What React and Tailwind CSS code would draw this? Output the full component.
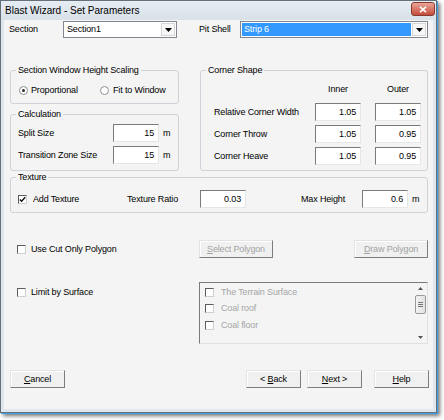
import React from "react";

const Combo = ({ text, w, selected }) => (
  <div className={`${w} h-[17px] bg-white border border-[#828790] flex`}>
    {selected ? (
      <div className="flex-1 m-[1px] bg-[#3399ff] text-white flex items-center pl-[2px]">{text}</div>
    ) : (
      <div className="flex-1 flex items-center pl-[3px]">{text}</div>
    )}
    <div className="w-[14px] m-[1px] ml-0 bg-[#f7f7f7] border border-[#d6d6d6] flex items-center justify-center">
      <svg width="7" height="4" viewBox="0 0 7 4">
        <path d="M0 0h7L3.5 4z" fill="#000" />
      </svg>
    </div>
  </div>
);

const Field = ({ value }) => (
  <div className="w-[46px] h-[18px] bg-white border border-t-[#7a7a7a] border-l-[#7a7a7a] border-r-[#e6e6e6] border-b-[#e6e6e6] flex items-center justify-end pr-[4px]">
    {value}
  </div>
);

const Check = ({ checked }) => (
  <span className="w-[9px] h-[9px] shrink-0 bg-white border border-t-[#5c5c5c] border-l-[#5c5c5c] border-r-[#cfcfcf] border-b-[#cfcfcf] flex items-center justify-center">
    {checked && (
      <svg width="7" height="7" viewBox="0 0 7 7">
        <path d="M0.8 3.4l1.8 1.9L6.2 1.2" stroke="#111" strokeWidth="1.4" fill="none" />
      </svg>
    )}
  </span>
);

const Radio = ({ on }) => (
  <span className="w-[9px] h-[9px] shrink-0 rounded-full border border-[#8e8f8f] bg-white flex items-center justify-center">
    {on && <span className="w-[3px] h-[3px] rounded-full bg-[#2a2a2a]" />}
  </span>
);

const Btn = ({ children, disabled, wide }) => (
  <div
    className={`${wide ? "w-[74px]" : "w-[55px]"} h-[18px] bg-[#f0f0f0] border border-t-[#e3e3e3] border-l-[#e3e3e3] border-r-[#7d7d7d] border-b-[#7d7d7d] shadow-[inset_1px_1px_0_#ffffff] flex items-center justify-center ${
      disabled ? "text-[#a3a3a3]" : "text-black"
    }`}
  >
    {children}
  </div>
);

const Group = ({ title, className, children }) => (
  <fieldset className={`border border-[#cdd3d8] rounded-[3px] ${className}`}>
    <legend className="ml-[5px] px-[2px] leading-[11px]">{title}</legend>
    {children}
  </fieldset>
);

const surfaces = ["The Terrain Surface", "Coal roof", "Coal floor"];

export default function App() {
  return (
    <div className="w-[444px] h-[420px] bg-white font-['Liberation_Sans',Arial,sans-serif] text-[9px] leading-[11px] tracking-[-0.15px] text-black">
      <div className="w-[437px] h-[413px] border border-[#66707a] bg-[#dfe6ed] flex flex-col shadow-[1px_1px_0_#3f9fe6,3px_3px_4px_rgba(0,0,0,0.55)]">
        {/* title bar */}
        <div className="h-[19px] shrink-0 flex items-start bg-gradient-to-b from-[#e6ecf2] to-[#d9e1e9]">
          <span className="mt-[4px] ml-[4px] text-[10px] leading-[12px] tracking-normal text-black">Blast Wizard - Set Parameters</span>
          <div className="ml-auto mr-[1px] mt-[1px] w-[24px] h-[14px] rounded-[3px] border border-[#8a3a30] bg-gradient-to-b from-[#e9a596] to-[#c4493a] flex items-center justify-center">
            <svg width="8" height="7" viewBox="0 0 8 7">
              <path d="M1 0.8l6 5.4M7 0.8l-6 5.4" stroke="#fff" strokeWidth="1.6" />
            </svg>
          </div>
        </div>

        {/* client area */}
        <div className="flex-1 mx-[3px] mb-[3px] bg-[#f4f4f4] flex flex-col">
          <div className="flex items-center h-[17px] mt-[1px]">
            <span className="w-[59px] pl-[5px]">Section</span>
            <Combo w="w-[114px]" text="Section1" />
            <span className="ml-[22px] w-[41px]">Pit Shell</span>
            <Combo w="w-[188px]" text="Strip 6" selected />
          </div>

          <div className="flex pl-[6px] gap-[21px] mt-[27px]">
            <div className="w-[169px] flex flex-col gap-[5px]">
              <Group title="Section Window Height Scaling" className="h-[39px]">
                <div className="flex items-center pl-[8px] mt-[9px]">
                  <div className="w-[81px] flex items-center gap-[3px]">
                    <Radio on />
                    <span>Proportional</span>
                  </div>
                  <div className="flex items-center gap-[4px]">
                    <Radio />
                    <span>Fit to Window</span>
                  </div>
                </div>
              </Group>
              <Group title="Calculation" className="h-[62px]">
                <div className="flex flex-col gap-[4px] pl-[7px] mt-[4px]">
                  {[["Split Size", "15"], ["Transition Zone Size", "15"]].map(([l, v]) => (
                    <div key={l} className="flex items-center">
                      <span className="w-[95px]">{l}</span>
                      <Field value={v} />
                      <span className="ml-[4px]">m</span>
                    </div>
                  ))}
                </div>
              </Group>
            </div>

            <Group title="Corner Shape" className="w-[228px] h-[106px]">
              <div className="flex pl-[13px] mt-[8px]">
                <span className="w-[101px]" />
                <span className="w-[46px] text-center">Inner</span>
                <span className="w-[46px] ml-[14px] text-center">Outer</span>
              </div>
              <div className="flex flex-col gap-[4px] pl-[13px] mt-[8px]">
                {[
                  ["Relative Corner Width", "1.05", "1.05"],
                  ["Corner Throw", "1.05", "0.95"],
                  ["Corner Heave", "1.05", "0.95"],
                ].map(([l, a, b]) => (
                  <div key={l} className="flex items-center">
                    <span className="w-[101px]">{l}</span>
                    <Field value={a} />
                    <span className="w-[14px]" />
                    <Field value={b} />
                  </div>
                ))}
              </div>
            </Group>
          </div>

          <div className="pl-[6px] mt-[1px]">
            <Group title="Texture" className="w-[418px] h-[41px]">
              <div className="flex items-center pl-[7px] mt-[7px]">
                <div className="w-[109px] flex items-center gap-[6px]">
                  <Check checked />
                  <span>Add Texture</span>
                </div>
                <span className="w-[73px]">Texture Ratio</span>
                <Field value="0.03" />
                <span className="ml-[55px] w-[61px]">Max Height</span>
                <Field value="0.6" />
                <span className="ml-[4px]">m</span>
              </div>
            </Group>
          </div>

          <div className="flex items-center pl-[13px] mt-[27px] h-[18px]">
            <div className="w-[182px] flex items-center gap-[5px]">
              <Check />
              <span>Use Cut Only Polygon</span>
            </div>
            <Btn disabled wide>
              <span><span className="underline">S</span>elect Polygon</span>
            </Btn>
            <span className="ml-[81px]" />
            <Btn disabled wide>
              <span><span className="underline">D</span>raw Polygon</span>
            </Btn>
          </div>

          <div className="flex items-start pl-[13px] mt-[24px]">
            <div className="w-[182px] flex items-center gap-[5px] mt-[5px]">
              <Check />
              <span>Limit by Surface</span>
            </div>
            <div className="w-[229px] h-[62px] border border-t-[#7a7a7a] border-l-[#7a7a7a] border-r-[#e0e0e0] border-b-[#e0e0e0] bg-[#f4f4f4] flex">
              <div className="flex-1 flex flex-col pt-[1px] pl-[5px]">
                {surfaces.map((s) => (
                  <div key={s} className="h-[16.5px] flex items-center gap-[7px] text-[#a6a6a6]">
                    <Check />
                    <span>{s}</span>
                  </div>
                ))}
              </div>
              <div className="w-[12px] mr-[1px] flex flex-col items-center">
                <svg width="5" height="3" viewBox="0 0 5 3" className="mt-[4px]">
                  <path d="M0 3h5L2.5 0z" fill="#555" />
                </svg>
                <div className="mt-[5px] w-[11px] h-[19px] bg-gradient-to-r from-[#f3f3f3] to-[#e2e2e2] border border-[#9a9a9a] rounded-[2px] flex flex-col items-center justify-center gap-[1px]">
                  <span className="w-[5px] h-px bg-[#777]" />
                  <span className="w-[5px] h-px bg-[#777]" />
                  <span className="w-[5px] h-px bg-[#777]" />
                </div>
                <svg width="5" height="3" viewBox="0 0 5 3" className="mt-auto mb-[4px]">
                  <path d="M0 0h5L2.5 3z" fill="#555" />
                </svg>
              </div>
            </div>
          </div>

          <div className="flex items-center pl-[6px] mt-[26px]">
            <Btn>
              <span><span className="underline">C</span>ancel</span>
            </Btn>
            <span className="ml-[181px]" />
            <Btn>
              <span>&lt; <span className="underline">B</span>ack</span>
            </Btn>
            <span className="ml-[6px]" />
            <Btn>
              <span><span className="underline">N</span>ext &gt;</span>
            </Btn>
            <span className="ml-[12px]" />
            <Btn>
              <span><span className="underline">H</span>elp</span>
            </Btn>
          </div>
        </div>
      </div>
    </div>
  );
}
